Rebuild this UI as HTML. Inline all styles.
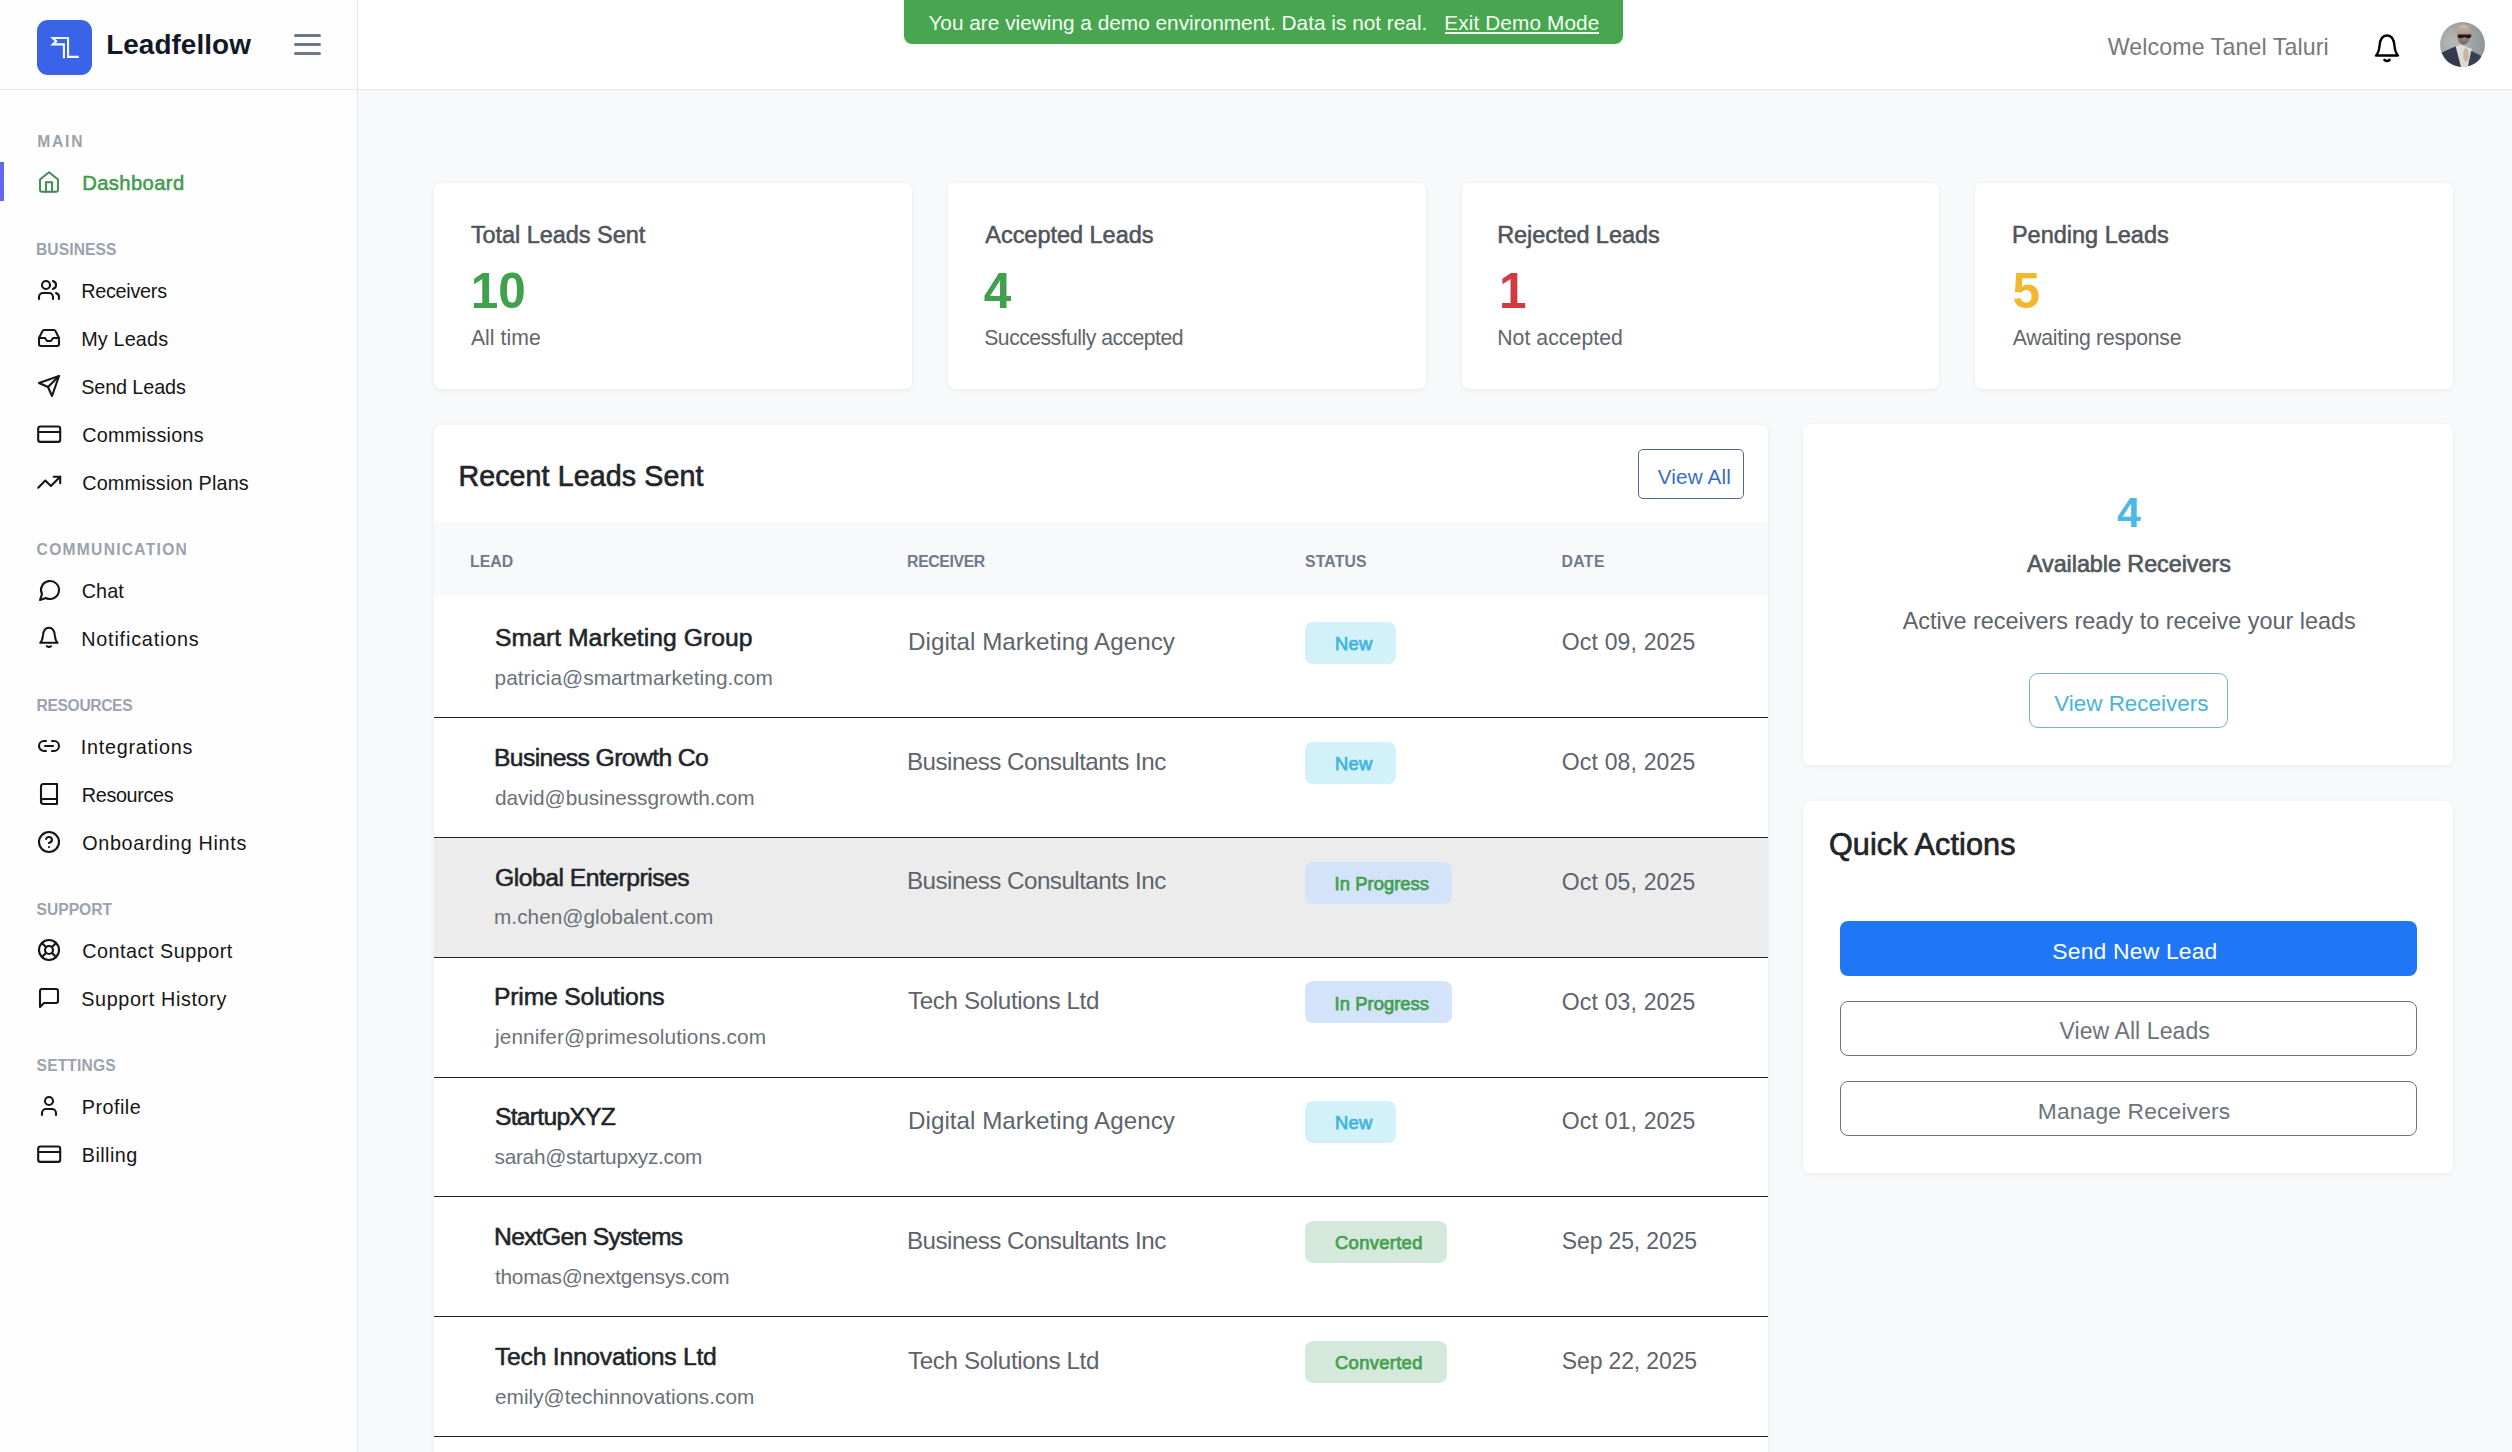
<!DOCTYPE html>
<html lang="en"><head><meta charset="utf-8"><title>Leadfellow - Dashboard</title><style>
*{margin:0;padding:0;box-sizing:content-box}
html,body{width:2512px;height:1452px;overflow:hidden;background:#f8f9fb;font-family:'Liberation Sans', sans-serif}
.sidebar{position:absolute;left:0;top:0;width:358px;height:1452px;background:#fefefe}
.header{position:absolute;left:358px;top:0;width:2154px;height:89px;background:#fff}
.hdr-line{position:absolute;left:0;top:89px;width:2512px;height:1px;background:#e6e6e8}
.side-line{position:absolute;left:357px;top:0;width:1px;height:1452px;background:#e4e4e5}
.logo{position:absolute;left:37px;top:20px;width:55px;height:55px;border-radius:11px;background:#3b63e7;overflow:hidden}
.logo svg{display:block}
.banner{position:absolute;left:904px;top:-10px;width:719px;height:53.5px;border-radius:8px;background:#47a64f}
.avatar{position:absolute;left:2440px;top:22px;width:45px;height:45px;border-radius:50%;overflow:hidden}
.avatar svg{display:block}
.card{position:absolute;background:#fff;border-radius:7px;box-shadow:0 1px 4px rgba(0,0,0,0.07)}
.t{position:absolute;white-space:nowrap}
</style></head><body>
<div class="sidebar"></div>
<div class="header"></div>
<div class="hdr-line"></div>
<div class="side-line"></div>
<div class="logo"><svg width="55" height="55" viewBox="0 0 55 55" fill="none" stroke="#f2fbff" stroke-width="2.1" stroke-linejoin="miter" stroke-miterlimit="10"><path d="M41.8,36.9 H31.04 V18.0 H15.8 L19.2,21.2 L15.8,24.4 H26.9 V38.2"/></svg></div>
<div style="position:absolute;left:294px;top:33.8px;width:27px;height:3px;border-radius:2px;background:#6e7689"></div>
<div style="position:absolute;left:294px;top:42.9px;width:27px;height:3px;border-radius:2px;background:#6e7689"></div>
<div style="position:absolute;left:294px;top:51.9px;width:27px;height:3px;border-radius:2px;background:#6e7689"></div>
<div class="banner"></div>
<div style="position:absolute;left:1445px;top:32px;width:154px;height:2px;background:#f4fff4"></div>
<svg style="position:absolute;left:2372px;top:32px" width="30" height="32" viewBox="0 0 30 32" fill="none" stroke="#000" stroke-width="2.4" stroke-linejoin="round" stroke-linecap="round"><path d="M4 23.5 C6.5 21 7 19 7.5 14 C8 7 10.5 3.5 15 3.5 C19.5 3.5 22 7 22.5 14 C23 19 23.5 21 26 23.5 Z"/><path d="M12.5 28 Q15 30 17.5 28" stroke-width="2.6"/></svg>
<div class="avatar"><svg width="45" height="45" viewBox="0 0 45 45"><defs><radialGradient id="ag" cx="0.3" cy="0.45" r="0.8"><stop offset="0" stop-color="#b4b9b8"/><stop offset="1" stop-color="#8b9192"/></radialGradient><linearGradient id="hg" x1="0" y1="0" x2="0" y2="1"><stop offset="0" stop-color="#d2bcad"/><stop offset="0.6" stop-color="#a58d7e"/><stop offset="1" stop-color="#6f5f57"/></linearGradient></defs><rect width="45" height="45" fill="url(#ag)"/><ellipse cx="23.5" cy="12.5" rx="6.8" ry="10" fill="url(#hg)"/><path d="M17.8 12.6 H31.2 V15 Q29 17.2 26.5 16 L24.5 15 L22.5 16 Q19.5 17.2 17.8 15 Z" fill="#1e1a1b"/><path d="M14.5 25 L20.5 22.5 L32 27 L29.5 45 L20 45 Z" fill="#dcddd9"/><path d="M1 31 L15.6 24.2 L21 45 L0 45 Z" fill="#353b4e"/><path d="M31.2 28.8 L40.5 33.5 L43 45 L27.8 45 Z" fill="#3a4053"/><ellipse cx="26" cy="33" rx="2.8" ry="7" fill="#c9b3a2"/></svg></div>
<svg style="position:absolute;left:37.00px;top:170.00px" width="24" height="24" viewBox="0 0 24 24" fill="none" stroke="#3d8b4e" stroke-width="1.8999999999999997" stroke-linecap="round" stroke-linejoin="round"><path d="M9 21.8V12.3H15V21.8" stroke-linejoin="miter"/><path d="M3 9.6L12 2.3L21 9.6V20A1.8 1.8 0 0 1 19.2 21.8H4.8A1.8 1.8 0 0 1 3 20Z"/></svg>
<svg style="position:absolute;left:37.00px;top:278.00px" width="24" height="24" viewBox="0 0 24 24" fill="none" stroke="#151515" stroke-width="2.1" stroke-linecap="round" stroke-linejoin="round"><path d="M16 21v-2a4 4 0 0 0-4-4H6a4 4 0 0 0-4 4v2"/><circle cx="9" cy="7" r="4"/><path d="M22 21v-2a4 4 0 0 0-3-3.87"/><path d="M16 3.13a4 4 0 0 1 0 7.75"/></svg>
<svg style="position:absolute;left:37.00px;top:326.30px" width="24" height="24" viewBox="0 0 24 24" fill="none" stroke="#151515" stroke-width="2.1" stroke-linecap="round" stroke-linejoin="round"><polyline points="22 12 16 12 14 15 10 15 8 12 2 12"/><path d="M5.45 5.11 2 12v6a2 2 0 0 0 2 2h16a2 2 0 0 0 2-2v-6l-3.45-6.89A2 2 0 0 0 16.76 4H7.24a2 2 0 0 0-1.790 1.11z"/></svg>
<svg style="position:absolute;left:37.00px;top:374.00px" width="24" height="24" viewBox="0 0 24 24" fill="none" stroke="#151515" stroke-width="2.1" stroke-linecap="round" stroke-linejoin="round"><path d="m22 2-7 20-4-9-9-4Z"/><path d="M22 2 11 13"/></svg>
<svg style="position:absolute;left:35.80px;top:420.80px" width="26.4" height="26.4" viewBox="0 0 24 24" fill="none" stroke="#151515" stroke-width="1.9090909090909094" stroke-linecap="round" stroke-linejoin="round"><rect width="20" height="14" x="2" y="5" rx="2"/><line x1="2" x2="22" y1="10" y2="10"/></svg>
<svg style="position:absolute;left:35.80px;top:469.10px" width="26.4" height="26.4" viewBox="0 0 24 24" fill="none" stroke="#151515" stroke-width="1.9090909090909094" stroke-linecap="round" stroke-linejoin="round"><polyline points="22 7 13.5 15.5 8.5 10.5 2 17"/><polyline points="16 7 22 7 22 13"/></svg>
<svg style="position:absolute;left:38.00px;top:578.00px" width="24" height="24" viewBox="0 0 24 24" fill="none" stroke="#151515" stroke-width="2.1" stroke-linecap="round" stroke-linejoin="round"><path d="M7.9 20A9 9 0 1 0 4 16.1L2 22Z"/></svg>
<svg style="position:absolute;left:36.9px;top:625.00px" width="23.8" height="24.3" preserveAspectRatio="none" viewBox="0 0 30 32" fill="none" stroke="#151515" stroke-width="2.6" stroke-linejoin="round" stroke-linecap="round"><path d="M4 23.5 C6.5 21 7 19 7.5 14 C8 7 10.5 3.5 15 3.5 C19.5 3.5 22 7 22.5 14 C23 19 23.5 21 26 23.5 Z"/><path d="M12.5 28 Q15 30 17.5 28" stroke-width="2.8"/></svg>
<svg style="position:absolute;left:37.00px;top:734.00px" width="24" height="24" viewBox="0 0 24 24" fill="none" stroke="#151515" stroke-width="2.1" stroke-linecap="round" stroke-linejoin="round"><path d="M9 17H7A5 5 0 0 1 7 7h2"/><path d="M15 7h2a5 5 0 1 1 0 10h-2"/><line x1="8" x2="16" y1="12" y2="12"/></svg>
<svg style="position:absolute;left:37.00px;top:782.00px" width="24" height="24" viewBox="0 0 24 24" fill="none" stroke="#151515" stroke-width="2.1" stroke-linecap="round" stroke-linejoin="round"><path d="M4 19.5v-15A2.5 2.5 0 0 1 6.5 2H20v20H6.5a2.5 2.5 0 0 1 0-5H20"/></svg>
<svg style="position:absolute;left:37.00px;top:830.00px" width="24" height="24" viewBox="0 0 24 24" fill="none" stroke="#151515" stroke-width="2.1" stroke-linecap="round" stroke-linejoin="round"><circle cx="12" cy="12" r="10"/><path d="M9.09 9a3 3 0 0 1 5.83 1c0 2-3 3-3 3"/><path d="M12 17h.01"/></svg>
<svg style="position:absolute;left:37.00px;top:938.00px" width="24" height="24" viewBox="0 0 24 24" fill="none" stroke="#151515" stroke-width="2.1" stroke-linecap="round" stroke-linejoin="round"><circle cx="12" cy="12" r="10"/><path d="m4.93 4.93 4.24 4.24"/><path d="m14.83 9.17 4.24-4.24"/><path d="m14.83 14.83 4.24 4.24"/><path d="m9.17 14.83-4.24 4.24"/><circle cx="12" cy="12" r="4"/></svg>
<svg style="position:absolute;left:37.00px;top:986.00px" width="24" height="24" viewBox="0 0 24 24" fill="none" stroke="#151515" stroke-width="2.1" stroke-linecap="round" stroke-linejoin="round"><path d="M21 15a2 2 0 0 1-2 2H7l-4 4V5a2 2 0 0 1 2-2h14a2 2 0 0 1 2 2z"/></svg>
<svg style="position:absolute;left:37.00px;top:1094.00px" width="24" height="24" viewBox="0 0 24 24" fill="none" stroke="#151515" stroke-width="2.1" stroke-linecap="round" stroke-linejoin="round"><path d="M19 21v-2a4 4 0 0 0-4-4H9a4 4 0 0 0-4 4v2"/><circle cx="12" cy="7" r="4"/></svg>
<svg style="position:absolute;left:35.80px;top:1140.80px" width="26.4" height="26.4" viewBox="0 0 24 24" fill="none" stroke="#151515" stroke-width="1.9090909090909094" stroke-linecap="round" stroke-linejoin="round"><rect width="20" height="14" x="2" y="5" rx="2"/><line x1="2" x2="22" y1="10" y2="10"/></svg>
<div style="position:absolute;left:0;top:162px;width:4px;height:39px;background:#6366f1"></div>
<div class="card" style="left:434.00px;top:183px;width:477.75px;height:206px"></div>
<div class="card" style="left:947.75px;top:183px;width:477.75px;height:206px"></div>
<div class="card" style="left:1461.50px;top:183px;width:477.75px;height:206px"></div>
<div class="card" style="left:1975.25px;top:183px;width:477.75px;height:206px"></div>
<div class="card" style="left:434px;top:425px;width:1334px;height:1100px;overflow:hidden"><div style="position:absolute;left:0;top:97px;width:100%;height:75px;background:#f8f9fa"></div></div>
<div style="position:absolute;left:434px;top:836.86px;width:1334px;height:119.83px;background:#ececec"></div>
<div style="position:absolute;left:1638px;top:449px;width:104px;height:48px;border:1px solid #4d6a93;border-radius:5px"></div>
<div style="position:absolute;left:434px;top:717.03px;width:1334px;height:1px;background:#212529"></div>
<div style="position:absolute;left:1305px;top:622.00px;width:91.3px;height:42px;border-radius:8px;background:#d2f1f9"></div>
<div style="position:absolute;left:434px;top:836.86px;width:1334px;height:1px;background:#212529"></div>
<div style="position:absolute;left:1305px;top:741.83px;width:91.3px;height:42px;border-radius:8px;background:#d2f1f9"></div>
<div style="position:absolute;left:434px;top:956.69px;width:1334px;height:1px;background:#212529"></div>
<div style="position:absolute;left:1305px;top:861.66px;width:147px;height:42px;border-radius:8px;background:#d3e3fa"></div>
<div style="position:absolute;left:434px;top:1076.52px;width:1334px;height:1px;background:#212529"></div>
<div style="position:absolute;left:1305px;top:981.49px;width:147px;height:42px;border-radius:8px;background:#d3e3fa"></div>
<div style="position:absolute;left:434px;top:1196.35px;width:1334px;height:1px;background:#212529"></div>
<div style="position:absolute;left:1305px;top:1101.32px;width:91.3px;height:42px;border-radius:8px;background:#d2f1f9"></div>
<div style="position:absolute;left:434px;top:1316.18px;width:1334px;height:1px;background:#212529"></div>
<div style="position:absolute;left:1305px;top:1221.15px;width:142px;height:42px;border-radius:8px;background:#d4e8dc"></div>
<div style="position:absolute;left:434px;top:1436.01px;width:1334px;height:1px;background:#212529"></div>
<div style="position:absolute;left:1305px;top:1340.98px;width:142px;height:42px;border-radius:8px;background:#d4e8dc"></div>
<div class="card" style="left:1803px;top:424px;width:650px;height:341px"></div>
<div style="position:absolute;left:2029px;top:673px;width:197px;height:53px;border:1px solid #73b7c9;border-radius:9px"></div>
<div class="card" style="left:1803px;top:801px;width:650px;height:372px"></div>
<div style="position:absolute;left:1840px;top:921px;width:577px;height:55px;border-radius:8px;background:#2077f6"></div>
<div style="position:absolute;left:1840px;top:1001px;width:575px;height:53px;border:1px solid #6f757b;border-radius:8px"></div>
<div style="position:absolute;left:1840px;top:1081px;width:575px;height:53px;border:1px solid #6f757b;border-radius:8px"></div>
<div class="t" style="left:106.20px;top:31.40px;font-size:27.9px;line-height:27.9px;font-weight:700;color:#121826;;letter-spacing:0.060px">Leadfellow</div>
<div class="t" style="left:928.40px;top:13.10px;font-size:20.8px;line-height:20.8px;font-weight:400;color:#f4fff4;;letter-spacing:0.006px">You are viewing a demo environment. Data is not real.</div>
<div class="t" style="left:1444.20px;top:13.10px;font-size:20.8px;line-height:20.8px;font-weight:400;color:#f4fff4;;letter-spacing:0.109px">Exit Demo Mode</div>
<div class="t" style="left:2107.80px;top:35.80px;font-size:23.2px;line-height:23.2px;font-weight:400;color:#77797c;;letter-spacing:0.093px">Welcome Tanel Taluri</div>
<div class="t" style="left:37.20px;top:133.70px;font-size:15.6px;line-height:15.6px;font-weight:700;color:#9aa2b0;;letter-spacing:1.803px">MAIN</div>
<div class="t" style="left:36.00px;top:241.60px;font-size:15.6px;line-height:15.6px;font-weight:700;color:#9aa2b0;;letter-spacing:0.113px">BUSINESS</div>
<div class="t" style="left:36.60px;top:542.00px;font-size:15.6px;line-height:15.6px;font-weight:700;color:#9aa2b0;;letter-spacing:1.286px">COMMUNICATION</div>
<div class="t" style="left:36.60px;top:697.70px;font-size:15.6px;line-height:15.6px;font-weight:700;color:#9aa2b0;;letter-spacing:-0.350px">RESOURCES</div>
<div class="t" style="left:36.60px;top:901.70px;font-size:15.6px;line-height:15.6px;font-weight:700;color:#9aa2b0;;letter-spacing:0.000px">SUPPORT</div>
<div class="t" style="left:36.60px;top:1057.50px;font-size:15.6px;line-height:15.6px;font-weight:700;color:#9aa2b0;;letter-spacing:0.143px">SETTINGS</div>
<div class="t" style="left:82.20px;top:173.00px;font-size:20.2px;line-height:20.2px;font-weight:400;color:#3f9c4e;-webkit-text-stroke:0.55px #3f9c4e;letter-spacing:0.411px">Dashboard</div>
<div class="t" style="left:81.20px;top:282.00px;font-size:19.8px;line-height:19.8px;font-weight:400;color:#151515;;letter-spacing:-0.264px">Receivers</div>
<div class="t" style="left:81.20px;top:330.30px;font-size:19.8px;line-height:19.8px;font-weight:400;color:#151515;;letter-spacing:0.157px">My Leads</div>
<div class="t" style="left:81.20px;top:378.00px;font-size:19.8px;line-height:19.8px;font-weight:400;color:#151515;;letter-spacing:-0.104px">Send Leads</div>
<div class="t" style="left:82.20px;top:426.00px;font-size:19.8px;line-height:19.8px;font-weight:400;color:#151515;;letter-spacing:0.280px">Commissions</div>
<div class="t" style="left:82.20px;top:474.00px;font-size:19.8px;line-height:19.8px;font-weight:400;color:#151515;;letter-spacing:0.183px">Commission Plans</div>
<div class="t" style="left:81.80px;top:582.00px;font-size:19.8px;line-height:19.8px;font-weight:400;color:#151515;;letter-spacing:0.031px">Chat</div>
<div class="t" style="left:81.20px;top:630.00px;font-size:19.8px;line-height:19.8px;font-weight:400;color:#151515;;letter-spacing:0.813px">Notifications</div>
<div class="t" style="left:80.80px;top:738.00px;font-size:19.8px;line-height:19.8px;font-weight:400;color:#151515;;letter-spacing:0.740px">Integrations</div>
<div class="t" style="left:81.80px;top:786.00px;font-size:19.8px;line-height:19.8px;font-weight:400;color:#151515;;letter-spacing:-0.350px">Resources</div>
<div class="t" style="left:82.20px;top:834.00px;font-size:19.8px;line-height:19.8px;font-weight:400;color:#151515;;letter-spacing:0.676px">Onboarding Hints</div>
<div class="t" style="left:82.20px;top:942.00px;font-size:19.8px;line-height:19.8px;font-weight:400;color:#151515;;letter-spacing:0.512px">Contact Support</div>
<div class="t" style="left:81.20px;top:990.00px;font-size:19.8px;line-height:19.8px;font-weight:400;color:#151515;;letter-spacing:0.627px">Support History</div>
<div class="t" style="left:81.80px;top:1098.00px;font-size:19.8px;line-height:19.8px;font-weight:400;color:#151515;;letter-spacing:0.466px">Profile</div>
<div class="t" style="left:81.80px;top:1146.00px;font-size:19.8px;line-height:19.8px;font-weight:400;color:#151515;;letter-spacing:0.435px">Billing</div>
<div class="t" style="left:470.90px;top:224.20px;font-size:23.5px;line-height:23.5px;font-weight:400;color:#50555b;-webkit-text-stroke:0.55px #50555b;letter-spacing:-0.049px">Total Leads Sent</div>
<div class="t" style="left:470.80px;top:266.20px;font-size:49.5px;line-height:49.5px;font-weight:700;color:#40a04c;">10</div>
<div class="t" style="left:470.90px;top:327.00px;font-size:21.2px;line-height:21.2px;font-weight:400;color:#60666c;;letter-spacing:0.055px">All time</div>
<div class="t" style="left:985.25px;top:224.20px;font-size:23.5px;line-height:23.5px;font-weight:400;color:#50555b;-webkit-text-stroke:0.55px #50555b;letter-spacing:-0.022px">Accepted Leads</div>
<div class="t" style="left:983.75px;top:266.20px;font-size:49.5px;line-height:49.5px;font-weight:700;color:#40a04c;">4</div>
<div class="t" style="left:984.25px;top:327.00px;font-size:21.2px;line-height:21.2px;font-weight:400;color:#60666c;;letter-spacing:-0.520px">Successfully accepted</div>
<div class="t" style="left:1497.20px;top:224.20px;font-size:23.5px;line-height:23.5px;font-weight:400;color:#50555b;-webkit-text-stroke:0.55px #50555b;letter-spacing:-0.066px">Rejected Leads</div>
<div class="t" style="left:1498.90px;top:266.20px;font-size:49.5px;line-height:49.5px;font-weight:700;color:#cf3b40;">1</div>
<div class="t" style="left:1497.20px;top:327.00px;font-size:21.2px;line-height:21.2px;font-weight:400;color:#60666c;;letter-spacing:0.075px">Not accepted</div>
<div class="t" style="left:2011.95px;top:224.20px;font-size:23.5px;line-height:23.5px;font-weight:400;color:#50555b;-webkit-text-stroke:0.55px #50555b;letter-spacing:-0.000px">Pending Leads</div>
<div class="t" style="left:2012.45px;top:266.20px;font-size:49.5px;line-height:49.5px;font-weight:700;color:#f1b82e;">5</div>
<div class="t" style="left:2012.75px;top:327.00px;font-size:21.2px;line-height:21.2px;font-weight:400;color:#60666c;;letter-spacing:-0.250px">Awaiting response</div>
<div class="t" style="left:458.40px;top:462.40px;font-size:28.67px;line-height:28.67px;font-weight:400;color:#212529;-webkit-text-stroke:0.65px #212529;letter-spacing:0.079px">Recent Leads Sent</div>
<div class="t" style="left:1657.80px;top:466.90px;font-size:20.7px;line-height:20.7px;font-weight:400;color:#3a6cc8;;letter-spacing:0.143px">View All</div>
<div class="t" style="left:470.10px;top:554.00px;font-size:15.8px;line-height:15.8px;font-weight:700;color:#707a8a;;letter-spacing:0.036px">LEAD</div>
<div class="t" style="left:907.10px;top:554.00px;font-size:15.8px;line-height:15.8px;font-weight:700;color:#707a8a;;letter-spacing:-0.370px">RECEIVER</div>
<div class="t" style="left:1305.00px;top:554.00px;font-size:15.8px;line-height:15.8px;font-weight:700;color:#707a8a;;letter-spacing:0.140px">STATUS</div>
<div class="t" style="left:1561.40px;top:554.00px;font-size:15.8px;line-height:15.8px;font-weight:700;color:#707a8a;;letter-spacing:0.399px">DATE</div>
<div class="t" style="left:495.00px;top:625.90px;font-size:24.7px;line-height:24.7px;font-weight:400;color:#212529;-webkit-text-stroke:0.55px #212529;letter-spacing:0.050px">Smart Marketing Group</div>
<div class="t" style="left:494.50px;top:667.70px;font-size:20.8px;line-height:20.8px;font-weight:400;color:#6a7178;;letter-spacing:0.068px">patricia@smartmarketing.com</div>
<div class="t" style="left:908.00px;top:629.70px;font-size:24.2px;line-height:24.2px;font-weight:400;color:#5e646b;;letter-spacing:0.029px">Digital Marketing Agency</div>
<div class="t" style="left:1335.00px;top:635.10px;font-size:18.4px;line-height:18.4px;font-weight:400;color:#44b5de;-webkit-text-stroke:0.75px #44b5de;letter-spacing:0.300px">New</div>
<div class="t" style="left:1561.80px;top:631.10px;font-size:23px;line-height:23px;font-weight:400;color:#5e646b;;letter-spacing:0.166px">Oct 09, 2025</div>
<div class="t" style="left:494.00px;top:745.73px;font-size:24.7px;line-height:24.7px;font-weight:400;color:#212529;-webkit-text-stroke:0.55px #212529;letter-spacing:-0.602px">Business Growth Co</div>
<div class="t" style="left:495.00px;top:787.53px;font-size:20.8px;line-height:20.8px;font-weight:400;color:#6a7178;;letter-spacing:-0.031px">david@businessgrowth.com</div>
<div class="t" style="left:907.00px;top:749.53px;font-size:24.2px;line-height:24.2px;font-weight:400;color:#5e646b;;letter-spacing:-0.533px">Business Consultants Inc</div>
<div class="t" style="left:1335.00px;top:754.93px;font-size:18.4px;line-height:18.4px;font-weight:400;color:#44b5de;-webkit-text-stroke:0.75px #44b5de;letter-spacing:0.300px">New</div>
<div class="t" style="left:1561.80px;top:750.93px;font-size:23px;line-height:23px;font-weight:400;color:#5e646b;;letter-spacing:0.166px">Oct 08, 2025</div>
<div class="t" style="left:495.00px;top:865.56px;font-size:24.7px;line-height:24.7px;font-weight:400;color:#212529;-webkit-text-stroke:0.55px #212529;letter-spacing:-0.498px">Global Enterprises</div>
<div class="t" style="left:494.00px;top:907.36px;font-size:20.8px;line-height:20.8px;font-weight:400;color:#6a7178;;letter-spacing:0.028px">m.chen@globalent.com</div>
<div class="t" style="left:907.00px;top:869.36px;font-size:24.2px;line-height:24.2px;font-weight:400;color:#5e646b;;letter-spacing:-0.534px">Business Consultants Inc</div>
<div class="t" style="left:1334.60px;top:874.76px;font-size:18.4px;line-height:18.4px;font-weight:400;color:#45a14f;-webkit-text-stroke:0.75px #45a14f;letter-spacing:0.040px">In Progress</div>
<div class="t" style="left:1561.80px;top:870.76px;font-size:23px;line-height:23px;font-weight:400;color:#5e646b;;letter-spacing:0.166px">Oct 05, 2025</div>
<div class="t" style="left:494.00px;top:985.39px;font-size:24.7px;line-height:24.7px;font-weight:400;color:#212529;-webkit-text-stroke:0.55px #212529;letter-spacing:-0.167px">Prime Solutions</div>
<div class="t" style="left:495.00px;top:1027.19px;font-size:20.8px;line-height:20.8px;font-weight:400;color:#6a7178;;letter-spacing:0.097px">jennifer@primesolutions.com</div>
<div class="t" style="left:908.00px;top:989.19px;font-size:24.2px;line-height:24.2px;font-weight:400;color:#5e646b;;letter-spacing:-0.367px">Tech Solutions Ltd</div>
<div class="t" style="left:1334.60px;top:994.59px;font-size:18.4px;line-height:18.4px;font-weight:400;color:#45a14f;-webkit-text-stroke:0.75px #45a14f;letter-spacing:0.040px">In Progress</div>
<div class="t" style="left:1561.80px;top:990.59px;font-size:23px;line-height:23px;font-weight:400;color:#5e646b;;letter-spacing:0.166px">Oct 03, 2025</div>
<div class="t" style="left:495.00px;top:1105.22px;font-size:24.7px;line-height:24.7px;font-weight:400;color:#212529;-webkit-text-stroke:0.55px #212529;letter-spacing:-0.747px">StartupXYZ</div>
<div class="t" style="left:494.50px;top:1147.02px;font-size:20.8px;line-height:20.8px;font-weight:400;color:#6a7178;;letter-spacing:-0.270px">sarah@startupxyz.com</div>
<div class="t" style="left:908.00px;top:1109.02px;font-size:24.2px;line-height:24.2px;font-weight:400;color:#5e646b;;letter-spacing:0.029px">Digital Marketing Agency</div>
<div class="t" style="left:1335.00px;top:1114.42px;font-size:18.4px;line-height:18.4px;font-weight:400;color:#44b5de;-webkit-text-stroke:0.75px #44b5de;letter-spacing:0.300px">New</div>
<div class="t" style="left:1561.80px;top:1110.42px;font-size:23px;line-height:23px;font-weight:400;color:#5e646b;;letter-spacing:0.166px">Oct 01, 2025</div>
<div class="t" style="left:494.00px;top:1225.05px;font-size:24.7px;line-height:24.7px;font-weight:400;color:#212529;-webkit-text-stroke:0.55px #212529;letter-spacing:-0.702px">NextGen Systems</div>
<div class="t" style="left:495.00px;top:1266.85px;font-size:20.8px;line-height:20.8px;font-weight:400;color:#6a7178;;letter-spacing:-0.250px">thomas@nextgensys.com</div>
<div class="t" style="left:907.00px;top:1228.85px;font-size:24.2px;line-height:24.2px;font-weight:400;color:#5e646b;;letter-spacing:-0.533px">Business Consultants Inc</div>
<div class="t" style="left:1335.00px;top:1234.25px;font-size:18.4px;line-height:18.4px;font-weight:400;color:#45a14f;-webkit-text-stroke:0.75px #45a14f;letter-spacing:0.314px">Converted</div>
<div class="t" style="left:1561.80px;top:1230.25px;font-size:23px;line-height:23px;font-weight:400;color:#5e646b;;letter-spacing:-0.139px">Sep 25, 2025</div>
<div class="t" style="left:495.00px;top:1344.88px;font-size:24.7px;line-height:24.7px;font-weight:400;color:#212529;-webkit-text-stroke:0.55px #212529;letter-spacing:-0.244px">Tech Innovations Ltd</div>
<div class="t" style="left:495.00px;top:1386.68px;font-size:20.8px;line-height:20.8px;font-weight:400;color:#6a7178;;letter-spacing:0.005px">emily@techinnovations.com</div>
<div class="t" style="left:908.00px;top:1348.68px;font-size:24.2px;line-height:24.2px;font-weight:400;color:#5e646b;;letter-spacing:-0.367px">Tech Solutions Ltd</div>
<div class="t" style="left:1335.00px;top:1354.08px;font-size:18.4px;line-height:18.4px;font-weight:400;color:#45a14f;-webkit-text-stroke:0.75px #45a14f;letter-spacing:0.314px">Converted</div>
<div class="t" style="left:1561.80px;top:1350.08px;font-size:23px;line-height:23px;font-weight:400;color:#5e646b;;letter-spacing:-0.139px">Sep 22, 2025</div>
<div class="t" style="left:2116.90px;top:491.80px;font-size:42.5px;line-height:42.5px;font-weight:700;color:#4bb8e5;">4</div>
<div class="t" style="left:2026.90px;top:553.00px;font-size:23.4px;line-height:23.4px;font-weight:400;color:#52575e;-webkit-text-stroke:0.65px #52575e;letter-spacing:-0.056px">Available Receivers</div>
<div class="t" style="left:1902.70px;top:609.90px;font-size:23.46px;line-height:23.46px;font-weight:400;color:#5e646b;;letter-spacing:-0.011px">Active receivers ready to receive your leads</div>
<div class="t" style="left:2054.20px;top:692.80px;font-size:22.4px;line-height:22.4px;font-weight:400;color:#4ab3d9;;letter-spacing:0.022px">View Receivers</div>
<div class="t" style="left:1828.90px;top:828.90px;font-size:30.6px;line-height:30.6px;font-weight:400;color:#212529;-webkit-text-stroke:0.7px #212529;letter-spacing:0.104px">Quick Actions</div>
<div class="t" style="left:2052.30px;top:940.40px;font-size:22.9px;line-height:22.9px;font-weight:400;color:#ffffff;;letter-spacing:0.179px">Send New Lead</div>
<div class="t" style="left:2059.50px;top:1019.90px;font-size:23.1px;line-height:23.1px;font-weight:400;color:#6c737a;;letter-spacing:0.044px">View All Leads</div>
<div class="t" style="left:2037.80px;top:1099.60px;font-size:22.8px;line-height:22.8px;font-weight:400;color:#6c737a;;letter-spacing:0.150px">Manage Receivers</div>
</body></html>
